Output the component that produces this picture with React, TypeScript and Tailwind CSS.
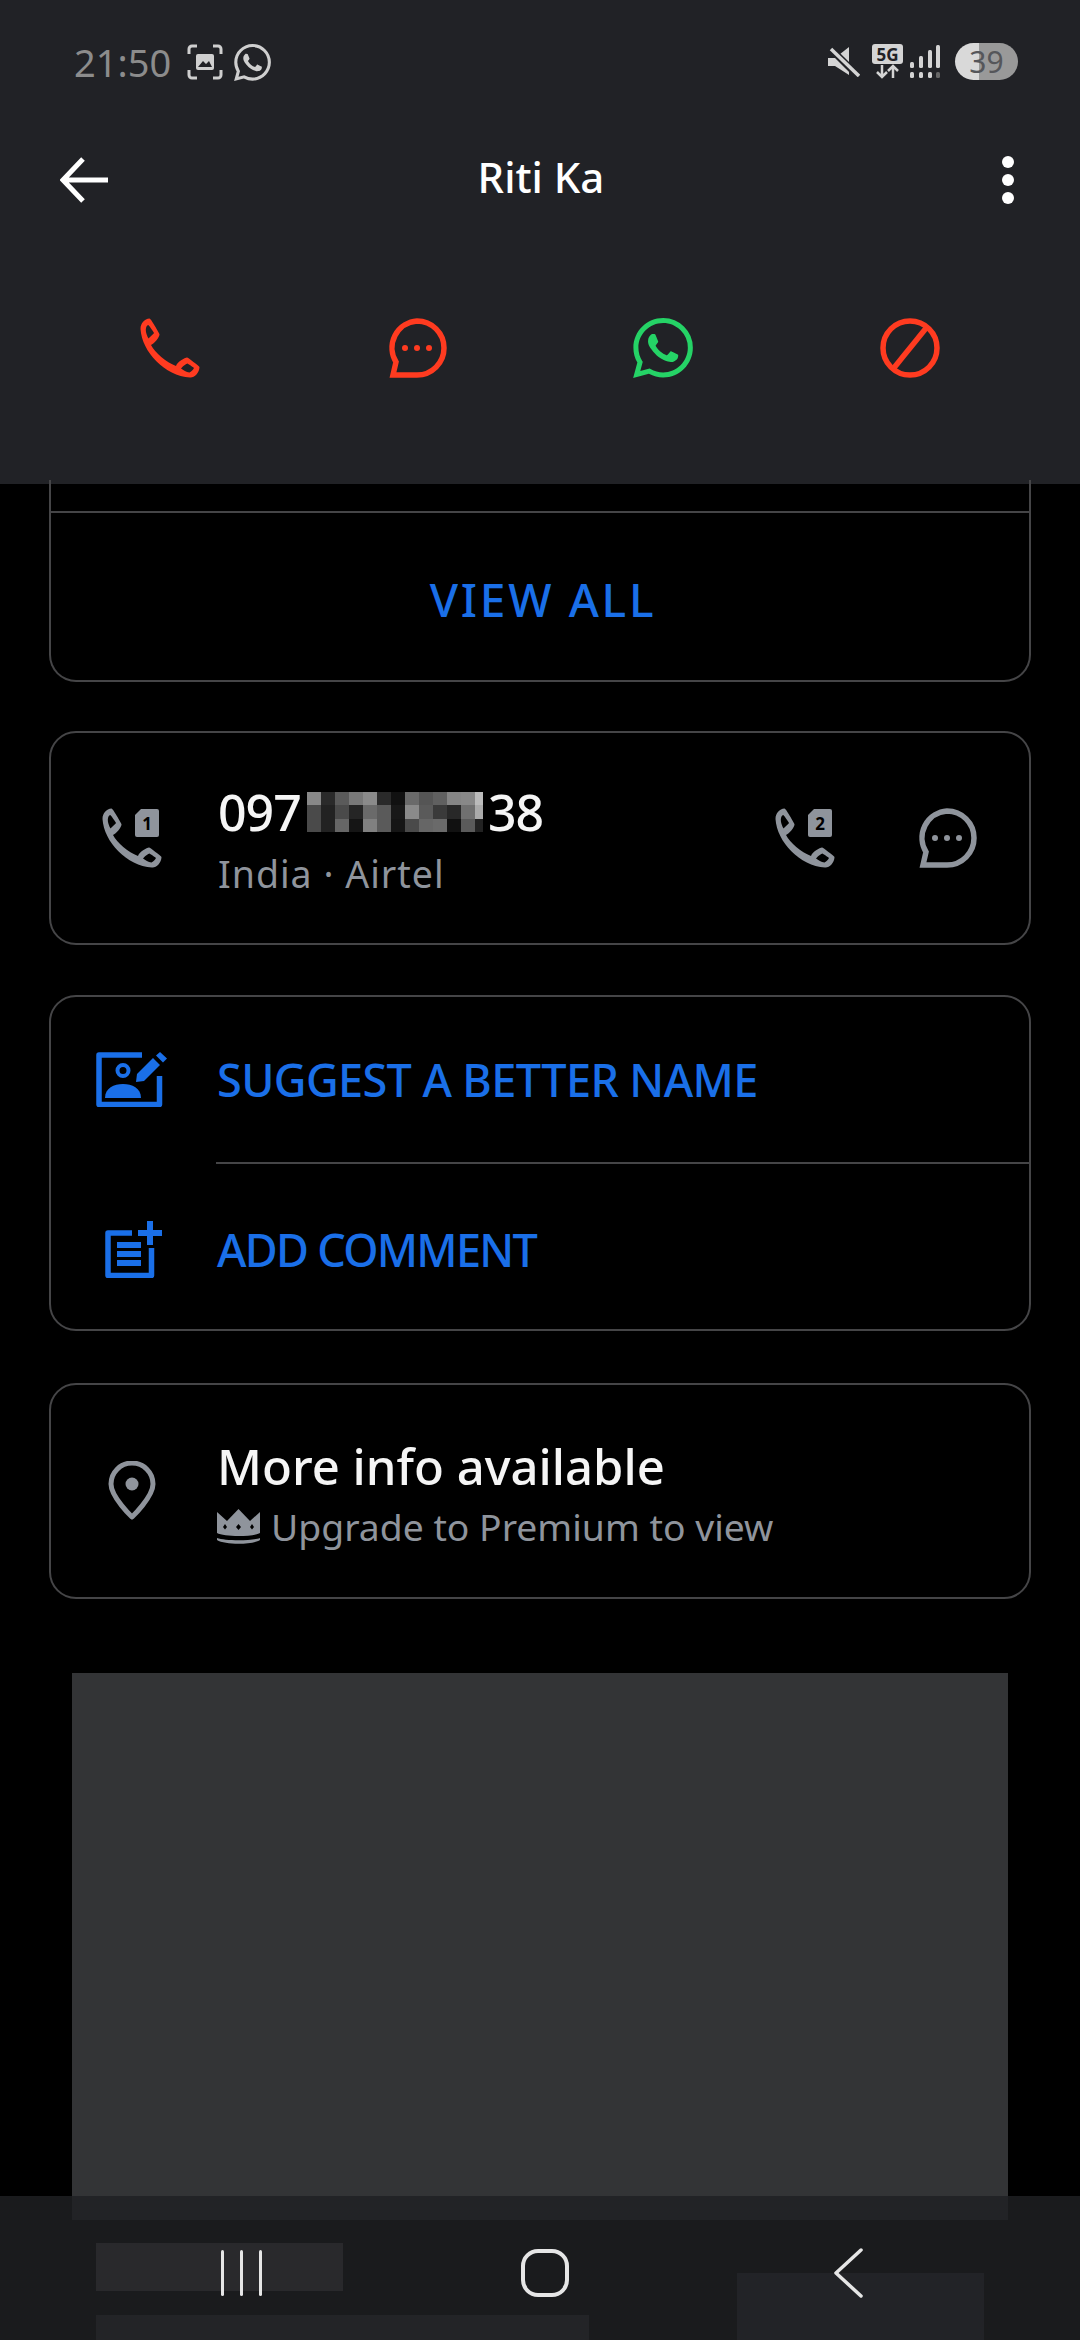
import { SiWhatsapp } from 'react-icons/si';

const RED = '#ff3b20';
const GRAY = '#8f949c';
const BLUE = '#1a6fe8';

// pixel mosaic hiding part of the number
const MOSAIC = [
  '#888888', '#2a2a2a', '#5a5a5a', '#787878', '#8a8a8a', '#2a2a2a', '#111111', '#6a6a6a', '#555555', '#606060', '#858585', '#888888', '#bbbbbb',
  '#4a4a4a', '#222222', '#4a4a4a', '#252525', '#6a6a6a', '#5a5a5a', '#181818', '#8a8a8a', '#5a5a5a', '#3a3a3a', '#282828', '#707070', '#aaaaaa',
  '#4a4a4a', '#222222', '#666666', '#151515', '#808080', '#5a5a5a', '#151515', '#4a4a4a', '#666666', '#6a6a6a', '#111111', '#5a5a5a', '#222222',
];

function Handset({ color }: { color: string }) {
  return (
    <path
      fillRule="evenodd"
      fill={color}
      d="M9.5 0.5C4.5 1 0.5 5 0.5 11C2 34 25 58 50 59.5C54 60 59.5 55 59.5 49C59 48 48 39.5 47 39.5C45 39.5 37 44 36 48C26 44 15 35 11 27C14 26 20 19 19.5 16C19 15 11 0.5 9.5 0.5Z M8 7C6 8 5.5 11 6 14C6.5 16 7 18 8.5 20.5C10 19 13.5 16 14 15C13.5 14 9 7 8 7Z M41 50.5C44 47 46 46 47.5 45.5C49 46.5 53 49 54 50C53 52 51 54 49.5 54.5C46 54 43.5 52 41 50.5Z"
    />
  );
}

function PhoneIcon({ color, className }: { color: string; className?: string }) {
  return (
    <svg viewBox="0 0 60 60" className={className}>
      <Handset color={color} />
    </svg>
  );
}

function SimPhoneIcon({ slot }: { slot: string }) {
  return (
    <svg viewBox="0 0 60 60" className="h-[60px] w-[60px] shrink-0">
      <Handset color={GRAY} />
      <path d="M39 1H55a2 2 0 0 1 2 2V27a2 2 0 0 1-2 2H35a2 2 0 0 1-2-2V7Z" fill={GRAY} />
      <text x="45" y="22" textAnchor="middle" fontSize="17" fontWeight="700" fill="#000" fontFamily="'Noto Sans', sans-serif">
        {slot}
      </text>
    </svg>
  );
}

function BubbleIcon({ color, className }: { color: string; className?: string }) {
  return (
    <svg viewBox="0 0 60 60" className={className}>
      <path d="M30 3a27 27 0 0 1 0 54H6l3-13A27 27 0 0 1 30 3Z" fill="none" stroke={color} strokeWidth="5.5" />
      <circle cx="18" cy="30" r="3" fill={color} />
      <circle cx="30" cy="30" r="3" fill={color} />
      <circle cx="42" cy="30" r="3" fill={color} />
    </svg>
  );
}

function BlockIcon() {
  return (
    <svg viewBox="0 0 60 60" className="h-[60px] w-[60px]">
      <circle cx="30" cy="30" r="27" fill="none" stroke={RED} strokeWidth="5.5" />
      <path d="M47 9L13 51" stroke={RED} strokeWidth="5.5" />
    </svg>
  );
}

function SuggestIcon() {
  return (
    <svg viewBox="0 0 71 55" className="h-[55px] w-[71px] shrink-0">
      <path d="M46 3H3V52.5H63.5V24" fill="none" stroke={BLUE} strokeWidth="5.5" strokeLinejoin="round" />
      <circle cx="27" cy="18.5" r="5.5" fill="none" stroke={BLUE} strokeWidth="4" />
      <path d="M9 46C9 36 18 32 27 32S45 36 45 46Z" fill={BLUE} />
      <path d="M40 30L41 22L57 6L64 13L48 29ZM60 3.5L64 0L71 6.5L67 10.5Z" fill={BLUE} />
    </svg>
  );
}

function AddCommentIcon() {
  return (
    <svg viewBox="0 0 57 57" className="h-[57px] w-[57px] shrink-0">
      <path d="M27 12H3V54.5H46.5V27" fill="none" stroke={BLUE} strokeWidth="5.5" strokeLinejoin="round" />
      <path d="M33 12H57M45 0V24" fill="none" stroke={BLUE} strokeWidth="6" />
      <path d="M12 24H36M12 33H36M12 42H36" fill="none" stroke={BLUE} strokeWidth="6" />
    </svg>
  );
}

function PinIcon() {
  return (
    <svg viewBox="0 0 48 60" className="h-[60px] w-[48px] shrink-0">
      <path d="M24 56C24 56 3 36 3 23A21 21 0 0 1 45 23C45 36 24 56 24 56Z" fill="none" stroke={GRAY} strokeWidth="5" strokeLinejoin="round" />
      <circle cx="24" cy="23" r="6.5" fill={GRAY} />
    </svg>
  );
}

function CrownIcon() {
  return (
    <svg viewBox="0 0 43 35" className="h-[35px] w-[43px] shrink-0">
      <path d="M0 3L10 12L21.5 0L33 12L43 3V24C36 28 7 28 0 24Z" fill={GRAY} />
      <path d="M21.5 15L24 18L21.5 21L19 18ZM8 15L10 18L8 20.5L6 18ZM35 15L37 18L35 20.5L33 18Z" fill="#000" />
      <path d="M0 29C8 32 35 32 43 29V31C35 36 8 36 0 31Z" fill={GRAY} />
    </svg>
  );
}

function StatusIcons() {
  return (
    <div className="flex items-center">
      <svg viewBox="0 0 32 30" className="h-[30px] w-[32px]">
        <path d="M0 11H7L21 0V28L7 19H0Z" fill="#d4d4d4" />
        <path d="M2 1L31 30" stroke="#212226" strokeWidth="7" />
        <path d="M3 2L31 29" stroke="#d4d4d4" strokeWidth="3.5" />
      </svg>
      <div className="ml-[12px] flex w-[31px] flex-col items-center">
        <div className="flex h-[20px] w-[31px] items-center justify-center rounded-[3px] bg-[#d4d4d4] text-[17px] font-bold leading-none text-[#212226]">
          5G
        </div>
        <svg viewBox="0 0 31 15" className="h-[15px] w-[31px]">
          <path d="M10 1V13M5 8L10 13L15 8M21 14V2M16 7L21 2L26 7" fill="none" stroke="#d4d4d4" strokeWidth="2.5" />
        </svg>
      </div>
      <svg viewBox="0 0 31 33" className="ml-[7px] h-[33px] w-[31px]">
        <rect x="0" y="17" width="4" height="6" rx="1.5" fill="#d4d4d4" />
        <rect x="9" y="11" width="4" height="12" rx="1.5" fill="#d4d4d4" />
        <rect x="18" y="5" width="4" height="18" rx="1.5" fill="#d4d4d4" />
        <rect x="26" y="0" width="4" height="23" rx="1.5" fill="#d4d4d4" />
        <rect x="0" y="27" width="4" height="6" rx="1.5" fill="#d4d4d4" />
        <rect x="9" y="27" width="4" height="6" rx="1.5" fill="#d4d4d4" />
        <rect x="18" y="27" width="4" height="6" rx="1.5" fill="#d4d4d4" />
        <rect x="26" y="27" width="4" height="6" rx="1.5" fill="#666" />
      </svg>
      <div className="ml-[14px] flex h-[37px] w-[63px] items-center justify-center rounded-full bg-[linear-gradient(90deg,#d9d9d9_38%,#999999_38%)] text-[30px] leading-none text-[#55565a]">
        39
      </div>
    </div>
  );
}

function Nav() {
  return (
    <div className="absolute inset-x-0 bottom-0 h-[144px] bg-[#1f2023d4]">
      <div className="absolute left-[96px] top-[47px] h-[48px] w-[247px] bg-[#29292c]" />
      <div className="absolute left-[96px] top-[119px] h-[25px] w-[493px] bg-[#232427]" />
      <div className="absolute left-[737px] top-[77px] h-[67px] w-[247px] bg-[#222327]" />
      <div className="relative ml-[90px] grid grid-cols-[303px_303px_303px] pt-[53px]">
        <div className="flex h-[48px] items-center justify-center gap-[16px]">
          <span className="h-[46px] w-[3px] rounded-full bg-[#e6e6e6]" />
          <span className="h-[46px] w-[3px] rounded-full bg-[#e6e6e6]" />
          <span className="h-[46px] w-[3px] rounded-full bg-[#e6e6e6]" />
        </div>
        <div className="flex h-[48px] items-center justify-center">
          <span className="h-[48px] w-[48px] rounded-[17px] border-[4px] border-[#e6e6e6]" />
        </div>
        <div className="flex h-[48px] items-center justify-center">
          <svg viewBox="0 0 30 50" className="h-[50px] w-[30px]">
            <path d="M28 2L3 25L28 48" fill="none" stroke="#e6e6e6" strokeWidth="3.5" strokeLinecap="round" strokeLinejoin="round" />
          </svg>
        </div>
      </div>
    </div>
  );
}

export default function App() {
  return (
    <div className="relative h-[2340px] w-[1080px] overflow-hidden bg-black font-['Noto_Sans',sans-serif] text-white">
      <header className="h-[484px] bg-[#212226]">
        <div className="flex h-[140px] items-start justify-between pl-[74px] pr-[62px] pt-[43px]">
          <div className="flex items-center">
            <span className="text-[38px] leading-[38px] text-[#8c8c8c]">21:50</span>
            <svg viewBox="0 0 36 36" className="ml-[16px] h-[36px] w-[36px]">
              <path d="M2 10V5a3 3 0 0 1 3-3H10M26 2H31a3 3 0 0 1 3 3V10M34 26V31a3 3 0 0 1-3 3H26M10 34H5a3 3 0 0 1-3-3V26" fill="none" stroke="#cfcfcf" strokeWidth="3" />
              <rect x="9" y="10" width="18" height="16" rx="2" fill="#cfcfcf" />
              <path d="M11 23L16 17L19 20L22 17L25 23Z" fill="#212226" />
            </svg>
            <SiWhatsapp className="ml-[11px] h-[37px] w-[37px] text-[#cfcfcf]" />
          </div>
          <StatusIcons />
        </div>

        <div className="grid h-[80px] grid-cols-[1fr_auto_1fr] items-center pl-[60px] pr-[66px]">
          <svg viewBox="0 0 48 46" className="h-[46px] w-[48px]">
            <path d="M23 2L3 23L23 44M3 23H48" fill="none" stroke="#fff" strokeWidth="5" />
          </svg>
          <span className="translate-x-[4px] -translate-y-[3px] text-[42px] font-medium leading-none">Riti Ka</span>
          <div className="flex flex-col gap-[6px] justify-self-end">
            <span className="h-[12px] w-[12px] rounded-full bg-white" />
            <span className="h-[12px] w-[12px] rounded-full bg-white" />
            <span className="h-[12px] w-[12px] rounded-full bg-white" />
          </div>
        </div>

        <div className="grid grid-cols-4 px-[47px] pt-[98px]">
          <div className="flex justify-center">
            <PhoneIcon color={RED} className="h-[60px] w-[60px]" />
          </div>
          <div className="flex justify-center">
            <BubbleIcon color={RED} className="h-[60px] w-[60px]" />
          </div>
          <div className="flex justify-center">
            <SiWhatsapp className="h-[60px] w-[60px] text-[#25d366]" />
          </div>
          <div className="flex justify-center">
            <BlockIcon />
          </div>
        </div>
      </header>

      <main className="flex flex-col px-[49px]">
        <section className="relative -mt-[4px] h-[202px] rounded-b-[27px] border-2 border-t-0 border-[#454547]">
          <div className="h-[33px] border-b-2 border-[#454547]" />
          <div className="flex h-[167px] items-center justify-center pl-[6px] pt-[5px] text-[46px] font-medium leading-none tracking-[2.7px] text-[#1a6fe8]">
            VIEW ALL
          </div>
        </section>

        <section className="mt-[49px] flex h-[214px] items-center rounded-[27px] border-2 border-[#454547] pl-[51px] pr-[52px]">
          <SimPhoneIcon slot="1" />
          <div className="ml-[56px] flex translate-y-[3px] flex-col">
            <div className="flex h-[56px] items-center text-[50px] font-medium leading-none text-[#f5f5f5]">
              <span className="w-[89px] tracking-[-1px]">097</span>
              <div className="grid grid-cols-[repeat(12,14px)_8px] grid-rows-[repeat(3,13.3px)]">
                {MOSAIC.map((c, i) => (
                  <span key={i} className="block h-full w-full" style={{ background: c }} />
                ))}
              </div>
              <span className="ml-[5px] tracking-[-1px]">38</span>
            </div>
            <span className="mt-[10px] text-[37.5px] font-normal leading-[48px] tracking-[1px] text-[#8f949c]">India · Airtel</span>
          </div>
          <div className="ml-auto flex items-center gap-[82px]">
            <SimPhoneIcon slot="2" />
            <BubbleIcon color={GRAY} className="h-[60px] w-[60px]" />
          </div>
        </section>

        <section className="mt-[50px] h-[336px] rounded-[27px] border-2 border-[#454547]">
          <div className="flex h-[165px] items-center pl-[45px] text-[45px] font-medium leading-none text-[#1a6fe8]">
            <SuggestIcon />
            <span className="ml-[50px] tracking-[-0.6px]">SUGGEST A BETTER NAME</span>
          </div>
          <div className="ml-[165px] h-[2px] bg-[#454547]" />
          <div className="flex h-[167px] items-center pl-[54px] pt-[3px] text-[45px] font-medium leading-none text-[#1a6fe8]">
            <AddCommentIcon />
            <span className="ml-[55px] tracking-[-1.7px]">ADD COMMENT</span>
          </div>
        </section>

        <section className="mt-[52px] flex h-[216px] items-center rounded-[27px] border-2 border-[#454547] pl-[57px]">
          <PinIcon />
          <div className="ml-[61px] flex translate-y-[2px] flex-col">
            <span className="text-[49px] font-medium leading-[62px] text-[#f5f5f5]">More info available</span>
            <div className="mt-[5px] flex items-center">
              <CrownIcon />
              <span className="ml-[11px] text-[37.3px] font-normal leading-[50px] text-[#8f949c]">Upgrade to Premium to view</span>
            </div>
          </div>
        </section>
      </main>

      <div className="ml-[72px] mt-[74px] h-[547px] w-[936px] bg-[#333436]" />

      <Nav />
    </div>
  );
}
